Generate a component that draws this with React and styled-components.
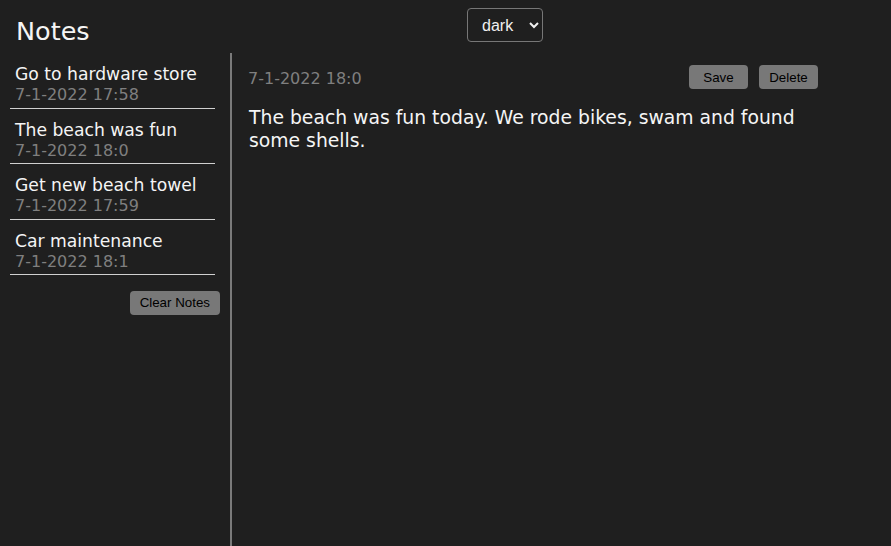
import React from "react";
import styled, { createGlobalStyle } from "styled-components";

const Global = createGlobalStyle`
  html, body { margin: 0; padding: 0; background: #1f1f1f; height: 100%; }
  body { font-family: "DejaVu Sans", Verdana, sans-serif; color: #f2f2f2; }
  #root { height: 100%; }
`;

const Page = styled.div`
  display: flex;
  flex-direction: column;
  height: 546px;
  background: #1f1f1f;
`;

const Header = styled.header`
  position: relative;
  height: 53px;
  display: flex;
  align-items: flex-start;
`;

const Title = styled.h1`
  margin: 0;
  padding: 15px 0 0 16px;
  font-size: 25.5px;
  font-weight: normal;
  line-height: 32px;
  color: #f5f5f5;
`;

const ThemeSelect = styled.select`
  position: absolute;
  left: 467px;
  top: 8px;
  width: 76px;
  height: 34px;
  background: #1f1f1f;
  color: #f0f0f0;
  border: 1px solid #777;
  border-radius: 4px;
  font-family: "Liberation Sans", Arial, sans-serif;
  font-size: 16px;
  padding: 0 6px 0 10px;
`;

const Body = styled.div`
  flex: 1;
  display: grid;
  grid-template-columns: 232px 1fr;
  min-height: 0;
`;

const Sidebar = styled.aside`
  border-right: 2px solid #7a7a7a;
  padding: 0 10px 0 10px;
  display: flex;
  flex-direction: column;
`;

const NoteList = styled.ul`
  list-style: none;
  margin: 0;
  padding: 0;
  width: 205px;
`;

const NoteItem = styled.li`
  padding: 10px 0 3.5px 5px;
  border-bottom: 1px solid #d0d0d0;
  cursor: pointer;
`;

const NoteTitle = styled.div`
  font-size: 17.2px;
  line-height: 23px;
  color: #f5f5f5;
`;

const NoteDate = styled.div`
  font-size: 16px;
  line-height: 18px;
  color: #7f7f7f;
`;

const Button = styled.button`
  background: #787878;
  color: #000;
  border: none;
  border-radius: 4px;
  font-family: "Liberation Sans", Arial, sans-serif;
  font-size: 13.33px;
  height: 24px;
  padding: 0 ${(p) => p.$pad || 10}px;
  min-width: ${(p) => p.$w || 0}px;
  cursor: pointer;
`;

const ClearRow = styled.div`
  display: flex;
  justify-content: flex-end;
  margin: 15.5px 0 0 0;
`;

const Main = styled.main`
  padding: 12px 0 0 16px;
  width: 570px;
`;

const Toolbar = styled.div`
  display: flex;
  align-items: center;
  height: 24px;
`;

const MainDate = styled.span`
  flex: 1;
  font-size: 16px;
  color: #7f7f7f;
  padding-top: 3px;
`;

const Buttons = styled.div`
  display: flex;
  gap: 11px;
`;

const Content = styled.p`
  margin: 17px 0 0 1px;
  font-size: 18.8px;
  line-height: 23px;
  color: #f5f5f5;
  width: 560px;
`;

const notes = [
  { title: "Go to hardware store", date: "7-1-2022 17:58" },
  { title: "The beach was fun", date: "7-1-2022 18:0" },
  { title: "Get new beach towel", date: "7-1-2022 17:59" },
  { title: "Car maintenance", date: "7-1-2022 18:1" },
];

export default function App() {
  return (
    <>
      <Global />
      <Page>
        <Header>
          <Title>Notes</Title>
          <ThemeSelect defaultValue="dark">
            <option value="dark">dark</option>
            <option value="light">light</option>
          </ThemeSelect>
        </Header>
        <Body>
          <Sidebar>
            <NoteList>
              {notes.map((n) => (
                <NoteItem key={n.title}>
                  <NoteTitle>{n.title}</NoteTitle>
                  <NoteDate>{n.date}</NoteDate>
                </NoteItem>
              ))}
            </NoteList>
            <ClearRow>
              <Button $pad={10}>Clear Notes</Button>
            </ClearRow>
          </Sidebar>
          <Main>
            <Toolbar>
              <MainDate>7-1-2022 18:0</MainDate>
              <Buttons>
                <Button $w={59}>Save</Button>
                <Button $w={59}>Delete</Button>
              </Buttons>
            </Toolbar>
            <Content>
              The beach was fun today. We rode bikes, swam and found some shells.
            </Content>
          </Main>
        </Body>
      </Page>
    </>
  );
}
